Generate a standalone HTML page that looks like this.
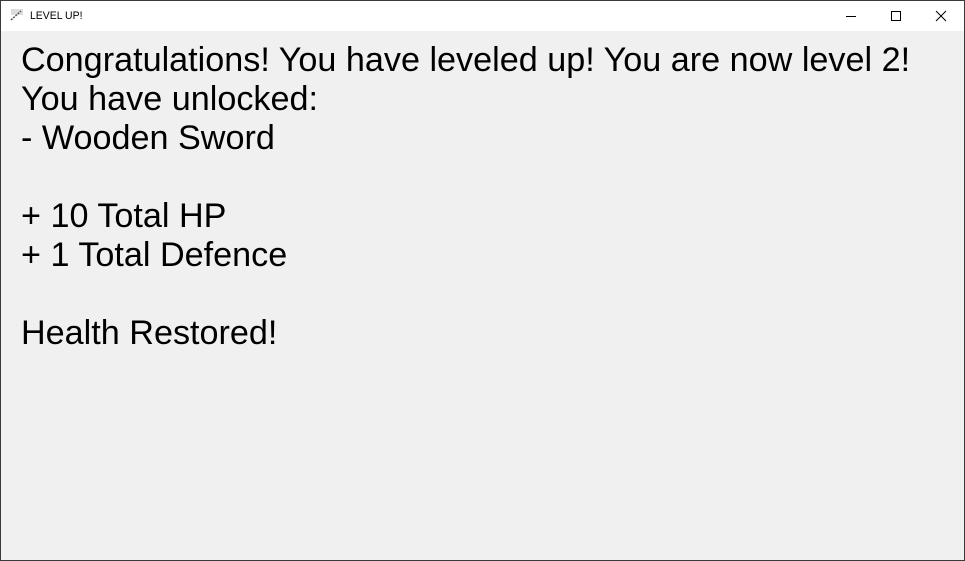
<!DOCTYPE html>
<html><head><style>
html,body{margin:0;padding:0;width:965px;height:561px;overflow:hidden;background:#2a2a2a;}
.win{position:absolute;left:0;top:0;width:963px;height:559px;border:1px solid #3a3a3a;background:#f0f0f0;}
.tb{position:absolute;left:0;top:0;width:963px;height:30px;background:#fff;}
.title{position:absolute;left:29px;top:9px;font:11px "Liberation Sans",sans-serif;color:#000;transform:scaleX(0.95);transform-origin:left;}
.txt{position:absolute;left:20px;top:40px;font:34px/39px "Liberation Sans",sans-serif;color:#000;white-space:pre;transform:scaleX(1.005);transform-origin:left top;}
</style></head><body>
<div class="win">
<div class="tb">
<svg style="position:absolute;left:8px;top:7px" width="16" height="14"><rect x="2" y="1" width="12" height="6" fill="#ddd"/><path d="M2 12 L12 3" stroke="#555" stroke-width="1.5" stroke-dasharray="2 1"/></svg>
<div class="title">LEVEL UP!</div>
<svg style="position:absolute;left:840px;top:8px" width="120" height="16">
<path d="M5 7.5 H15" stroke="#000" stroke-width="1"/>
<rect x="50.5" y="2.5" width="9" height="9" fill="none" stroke="#000"/>
<path d="M95 2 L105 12 M105 2 L95 12" stroke="#000" stroke-width="1"/>
</svg>
</div>
<div class="txt">Congratulations! You have leveled up! You are now level 2!
You have unlocked:
- Wooden Sword

+ 10 Total HP
+ 1 Total Defence

Health Restored!</div>
</div>
</body></html>
